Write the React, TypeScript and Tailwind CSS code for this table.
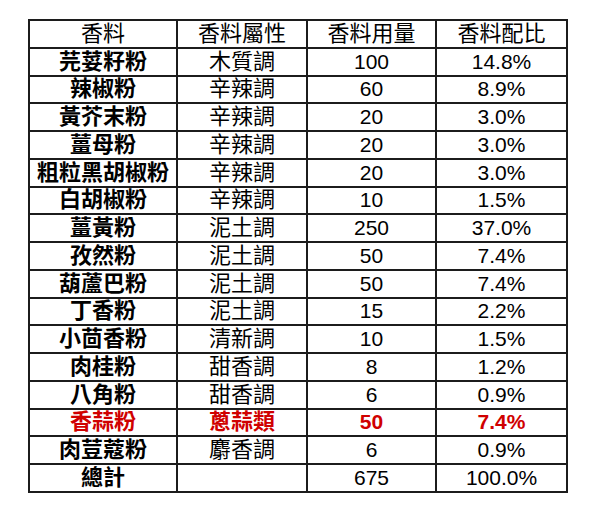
import React from "react";

type Row = { name: string; attr: string; amt: string; pct: string; red?: boolean };

const rows: Row[] = [
  { name: "芫荽籽粉", attr: "木質調", amt: "100", pct: "14.8%" },
  { name: "辣椒粉", attr: "辛辣調", amt: "60", pct: "8.9%" },
  { name: "黃芥末粉", attr: "辛辣調", amt: "20", pct: "3.0%" },
  { name: "薑母粉", attr: "辛辣調", amt: "20", pct: "3.0%" },
  { name: "粗粒黑胡椒粉", attr: "辛辣調", amt: "20", pct: "3.0%" },
  { name: "白胡椒粉", attr: "辛辣調", amt: "10", pct: "1.5%" },
  { name: "薑黃粉", attr: "泥土調", amt: "250", pct: "37.0%" },
  { name: "孜然粉", attr: "泥土調", amt: "50", pct: "7.4%" },
  { name: "葫蘆巴粉", attr: "泥土調", amt: "50", pct: "7.4%" },
  { name: "丁香粉", attr: "泥土調", amt: "15", pct: "2.2%" },
  { name: "小茴香粉", attr: "清新調", amt: "10", pct: "1.5%" },
  { name: "肉桂粉", attr: "甜香調", amt: "8", pct: "1.2%" },
  { name: "八角粉", attr: "甜香調", amt: "6", pct: "0.9%" },
  { name: "香蒜粉", attr: "蔥蒜類", amt: "50", pct: "7.4%", red: true },
  { name: "肉荳蔻粉", attr: "麝香調", amt: "6", pct: "0.9%" },
];

const cell = "border-2 border-[#1c1c1c] text-center align-middle p-0 leading-[24px]";
const cjk = `${cell} text-[22px]`;
const num = `${cell} text-[21px]`;

export default function App() {
  return (
    <div
      className="w-[600px] h-[520px] bg-white pt-[19px] pl-[28px]"
      style={{ fontFamily: '"Liberation Sans", "Noto Sans CJK TC", sans-serif' }}
    >
      <table className="border-collapse text-black table-fixed w-[538px]">
        <colgroup>
          <col className="w-[148px]" />
          <col className="w-[130px]" />
          <col className="w-[129px]" />
          <col className="w-[131px]" />
        </colgroup>
        <tbody>
          <tr className="h-[27.75px]">
            <td className={cjk}>香料</td>
            <td className={cjk}>香料屬性</td>
            <td className={cjk}>香料用量</td>
            <td className={cjk}>香料配比</td>
          </tr>
          {rows.map((r) => (
            <tr key={r.name} className={`h-[27.75px] ${r.red ? "text-[#d00000]" : ""}`}>
              <td className={`${cjk} font-bold`}>{r.name}</td>
              <td className={`${cjk} ${r.red ? "font-bold" : ""}`}>{r.attr}</td>
              <td className={`${num} ${r.red ? "font-bold" : ""}`}>{r.amt}</td>
              <td className={`${num} ${r.red ? "font-bold" : ""}`}>{r.pct}</td>
            </tr>
          ))}
          <tr className="h-[27.75px]">
            <td className={`${cjk} font-bold`}>總計</td>
            <td className={cjk}></td>
            <td className={num}>675</td>
            <td className={num}>100.0%</td>
          </tr>
        </tbody>
      </table>
    </div>
  );
}
